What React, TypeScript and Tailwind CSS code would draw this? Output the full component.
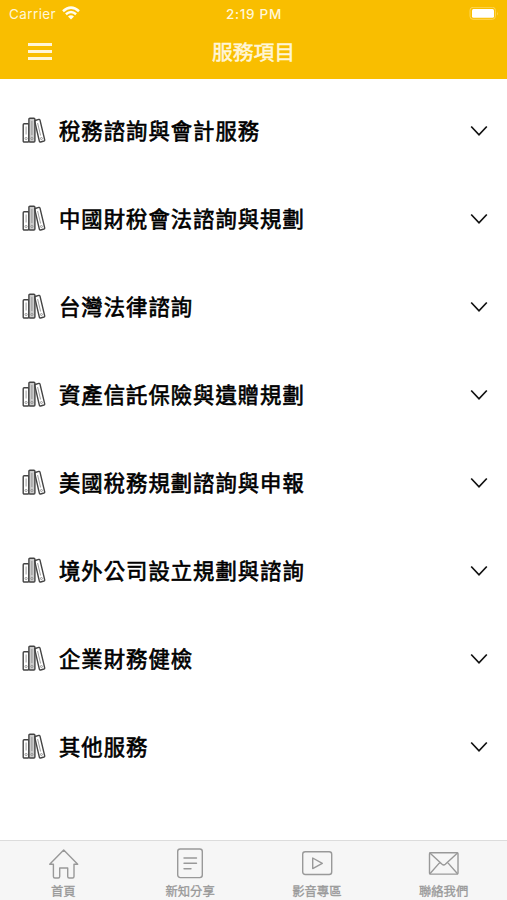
import type { ReactNode } from "react";

const services = [
  "稅務諮詢與會計服務",
  "中國財稅會法諮詢與規劃",
  "台灣法律諮詢",
  "資產信託保險與遺贈規劃",
  "美國稅務規劃諮詢與申報",
  "境外公司設立規劃與諮詢",
  "企業財務健檢",
  "其他服務",
];

function BooksIcon() {
  return (
    <svg className="h-[27px] w-6 shrink-0" viewBox="0 0 24 27" fill="none" stroke="#444" strokeWidth="1.4" strokeLinejoin="round">
      <rect x="1.2" y="6.8" width="5.7" height="18.2" rx="1" />
      <rect x="6.9" y="1.2" width="6" height="23.8" rx="1" fill="#ccc" />
      <path d="M13.2 3.5 L16.8 2.4 Q17.7 2.2 18 3.1 L22.7 22.8 Q22.9 23.7 22 24 L18.6 25 Q17.7 25.2 17.4 24.3 L12.8 4.6 Q12.6 3.7 13.2 3.5Z" />
      <g stroke="#888" strokeWidth="0.8">
        <path d="M4.1 9.5v8M9.9 4v14M15.6 6l3 12.5" />
        <circle cx="4.1" cy="21.5" r="1.1" />
        <circle cx="9.9" cy="21.5" r="1.1" />
        <circle cx="19.4" cy="21.5" r="1" />
      </g>
    </svg>
  );
}

function ServiceRow({ label }: { label: string }) {
  return (
    <button className="flex h-22 w-full items-center pr-[19px] pl-[22px] text-left">
      <BooksIcon />
      <span className="mb-px ml-[13px] flex-1 text-[21.3px] leading-8 tracking-[1.05px] whitespace-nowrap text-black [-webkit-text-stroke:0.65px_#000]">{label}</span>
      <svg className="mt-px h-3 w-[18px]" viewBox="0 0 18 12" fill="none" stroke="#111" strokeWidth="1.7">
        <path d="M1.2 1.5 9 9.8 16.8 1.5" />
      </svg>
    </button>
  );
}

function Tab({ label, children }: { label: string; children: ReactNode }) {
  return (
    <button className="flex flex-1 flex-col items-center pt-[6px] text-[#999]">
      <svg className="h-8 w-8" viewBox="0 0 32 32" fill="none" stroke="currentColor" strokeWidth="1.4" strokeLinejoin="round" strokeLinecap="round">
        {children}
      </svg>
      <span className="mt-[3px] text-[12.3px] leading-[18px] [-webkit-text-stroke:0.3px_#999]">{label}</span>
    </button>
  );
}

export default function App() {
  return (
    <div className="flex h-[900px] w-[507px] flex-col overflow-hidden bg-white font-['Noto_Sans_CJK_TC',sans-serif]">
      <header className="h-[79px] shrink-0 bg-[#f9be00] text-[#fff6d8]">
        <div className="grid h-7 grid-cols-3 items-center pr-2 pl-[9px] font-[Inter,sans-serif] text-[13.5px]">
          <div className="flex items-center gap-[6px]">
            <span className="tracking-[0.4px]">Carrier</span>
            <svg className="mb-[2px] h-[14px] w-[18px]" viewBox="0 0 18 14" fill="none" stroke="#fffdf2" strokeWidth="2.5">
              <path d="M1 5.2Q9-2 17 5.2M3.9 8.2Q9 3.8 14.1 8.2" />
              <path d="M9 13.5 6 10.5Q9 8.2 12 10.5Z" fill="#fffdf2" stroke="none" />
            </svg>
          </div>
          <span className="text-center text-[13.5px] font-medium tracking-[0.7px]">2:19 PM</span>
          <svg className="h-[14px] w-[30px] justify-self-end" viewBox="0 0 30 14">
            <rect x="1" y="0.3" width="25.4" height="12" rx="3" fill="none" stroke="#fdd659" />
            <rect x="3" y="2.1" width="22" height="8.6" rx="1.5" fill="white" />
            <path d="M28 4.5v4q1.5-2 0-4" fill="#fdd659" />
          </svg>
        </div>
        <div className="grid h-[47px] grid-cols-[1fr_auto_1fr] items-center px-[28px]">
          <div className="flex w-[24px] flex-col gap-1">
            <i className="h-[3px] bg-current" />
            <i className="h-[3px] bg-current" />
            <i className="h-[3px] bg-current" />
          </div>
          <h1 className="mb-[2px] text-[20.8px] leading-8 [-webkit-text-stroke:0.5px_#fff6d8]">服務項目</h1>
        </div>
      </header>
      <main className="min-h-0 flex-1 pt-[7px]">
        {services.map((label) => (
          <ServiceRow key={label} label={label} />
        ))}
      </main>
      <nav className="flex h-[60px] shrink-0 border-t border-[#dcdcdc] bg-[#f6f6f6]">
        <Tab label="首頁">
          <path d="M16.7 3 30.7 17.3H27V29.5Q27 31 25.5 31H22.2Q20.7 31 20.7 29.5V21H12.7V29.5Q12.7 31 11.2 31H7.9Q6.4 31 6.4 29.5V17.3H2.7Z" />
        </Tab>
        <Tab label="新知分享">
          <rect x="3.7" y="2" width="24.6" height="28.6" rx="2.5" />
          <path d="M10 11h12.5M10 16.3h12.5M10 21.8h7" />
        </Tab>
        <Tab label="影音專區">
          <rect x="1.7" y="4.7" width="29" height="22.8" rx="2.5" />
          <path d="M11.7 11v10.6l9.6-5.3z" />
        </Tab>
        <Tab label="聯絡我們">
          <rect x="1.5" y="5.7" width="28.5" height="21.4" rx="1" />
          <path d="m1.9 6 12.2 11.2q1.6 1.4 3.2 0L29.5 6M1.9 26.8l10-11.4M29.5 26.8l-10-11.4" />
        </Tab>
      </nav>
    </div>
  );
}
